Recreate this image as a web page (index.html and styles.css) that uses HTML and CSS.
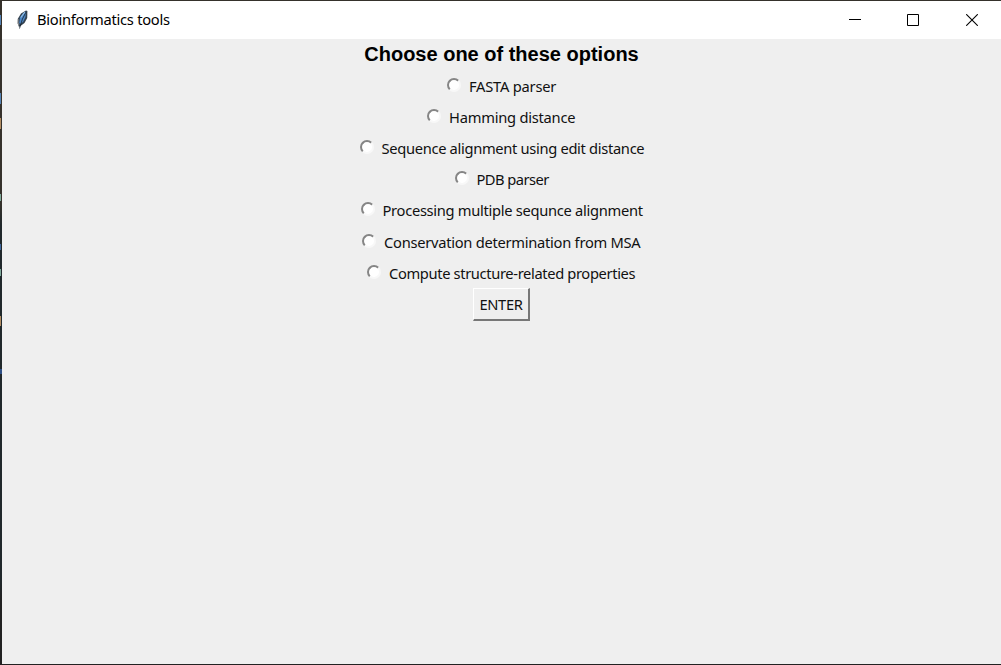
FILE: index.html
```html
<!DOCTYPE html>
<html lang="en">
<head>
<meta charset="utf-8">
<title>Bioinformatics tools</title>
<link rel="stylesheet" href="styles.css">
</head>
<body>
<div class="desktop">
<main class="window">
<header class="titlebar">
<svg class="feather" width="16" height="22" viewBox="0 0 16 22"><path d="M4 18 2.7 14.5 3 9.5 6 4.5 11 1.5 12.4 2 12.2 9 9.5 14 5.5 17Z" fill="#34414e"/><path d="M4.2 14 5 8.5 8 4.5 11 2.5 10.5 8 8 13 5 15Z" fill="#4b86c6"/><path d="M11 3Q7 9 4.5 19.5" fill="none" stroke="#18222c" stroke-width=".8"/><path d="M9.8 3 5.8 8.5" stroke="#92bfe8" stroke-width="1.2"/><path d="M3 10v4l1 2" fill="none" stroke="#999" stroke-width="1"/></svg>
<h1 class="title">Bioinformatics tools</h1>
<nav class="controls">
<svg width="12" height="12" viewBox="0 0 12 12"><path d="M0 5.5h12" stroke="#000"/></svg>
<svg width="12" height="12" viewBox="0 0 12 12"><path d="M.5.5h11v11H.5z" fill="none" stroke="#000"/></svg>
<svg class="close" width="12" height="12" viewBox="0 0 12 12"><path d="m.2.2 11.6 11.6M11.8.2.2 11.8" stroke="#000" stroke-width="1.1"/></svg>
</nav>
</header>
<section class="content">
<h2 class="heading">Choose one of these options</h2>
<div class="option"><span class="radio"></span><span class="label fasta">FASTA parser</span></div>
<div class="option"><span class="radio"></span><span class="label hamming">Hamming distance</span></div>
<div class="option"><span class="radio"></span><span class="label sequence">Sequence alignment using edit distance</span></div>
<div class="option"><span class="radio"></span><span class="label pdb">PDB parser</span></div>
<div class="option"><span class="radio"></span><span class="label processing">Processing multiple sequnce alignment</span></div>
<div class="option"><span class="radio"></span><span class="label conservation">Conservation determination from MSA</span></div>
<div class="option"><span class="radio"></span><span class="label compute">Compute structure-related properties</span></div>
<button class="enter">ENTER</button>
</section>
</main>
</div>
</body>
</html>
```
FILE: styles.css
```css
* { box-sizing: border-box; }
body { margin: 0; font-family: "Noto Sans", sans-serif; color: #111; }
.desktop {
  width: 1001px; height: 665px; padding: 1px 0 1px 2px;
  background:
    linear-gradient(#5583b5, #5583b5) 0 93px / 1px 11px no-repeat,
    linear-gradient(#b18c62, #b18c62) 0 118px / 1px 11px no-repeat,
    linear-gradient(#7fa99a, #7fa99a) 0 194px / 1px 7px no-repeat,
    linear-gradient(#3f669d, #3f669d) 0 244px / 1px 6px no-repeat,
    linear-gradient(#7fa99a, #7fa99a) 0 269px / 1px 7px no-repeat,
    linear-gradient(#b18c62, #b18c62) 0 316px / 1px 10px no-repeat,
    linear-gradient(#2e4f85, #2e4f85) 0 369px / 2px 5px no-repeat,
    linear-gradient(#5583b5, #5583b5) 0 15px / 1px 10px no-repeat,
    linear-gradient(#35312b 0 205px, #20282b 225px 580px, #222 600px);
}
.window { height: 663px; background: #efefef; display: flex; flex-direction: column; }
.titlebar { height: 38px; flex: none; background: #fff; display: flex; align-items: center; padding-left: 13px; }
.feather { margin-right: 6px; flex: none; }
.title { margin: 0; padding-bottom: 2px; font-size: 14.7px; font-weight: 400; line-height: 20px; letter-spacing: -.26px; white-space: nowrap; color: #000; }
.controls { margin-left: auto; display: flex; gap: 46px; padding-right: 23px; }
.controls svg { display: block; }
.controls .close { margin-left: 1px; }
.content { display: flex; flex-direction: column; align-items: center; }
.heading { margin: 0; height: 31px; font: bold 20px/31px "Liberation Sans", Arial, sans-serif; color: #000; white-space: nowrap; }
.option { height: 31.2px; display: flex; align-items: center; gap: 8px; }
.radio { width: 14px; height: 14px; margin-bottom: 2px; border-radius: 50%; background: #fff; border: 2px solid; border-color: #858585 #f8f8f8 #f8f8f8 #858585; flex: none; }
.label { font-size: 14.7px; line-height: 20px; white-space: nowrap; }
.fasta { width: 87px; letter-spacing: -.23px; }
.hamming { width: 127px; letter-spacing: -.24px; }
.sequence { width: 262px; letter-spacing: -.32px; }
.pdb { width: 72px; letter-spacing: -.55px; }
.processing { width: 260px; letter-spacing: -.3px; }
.conservation { width: 257px; letter-spacing: -.27px; }
.compute { width: 247px; letter-spacing: -.36px; }
.enter { width: 57px; height: 33px; margin: 0; padding: 0 0 1px; border: 2px solid; border-color: #fff #777 #777 #fff; border-width: 1px 2px 2px 1px; background: #efefef; font: 14.7px/20px "Noto Sans", sans-serif; letter-spacing: -.4px; color: #111; }
```
